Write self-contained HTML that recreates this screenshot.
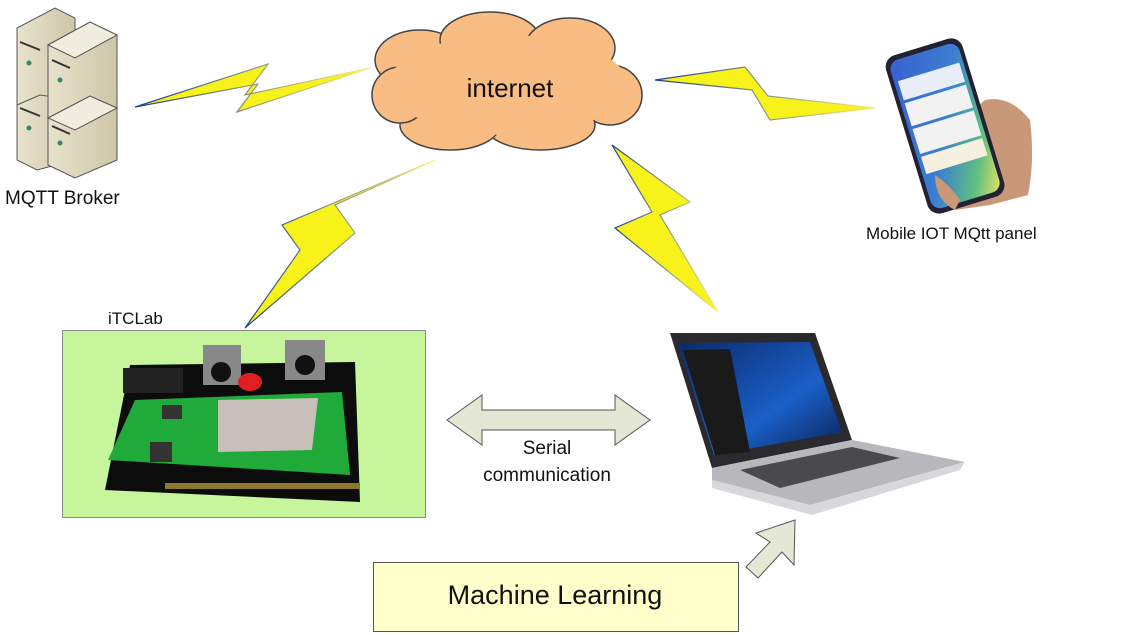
<!DOCTYPE html><html><head><meta charset="utf-8"><style>body{margin:0;background:#fff}svg{display:block}text{font-family:"Liberation Sans",sans-serif;fill:#111}</style></head><body>
<svg width="1128" height="635" viewBox="0 0 1128 635" xmlns="http://www.w3.org/2000/svg">
<defs>
<linearGradient id="bz" x1="0" x2="1"><stop offset="0" stop-color="#1c3f8a"/><stop offset="1" stop-color="#ffef7a"/></linearGradient>
<linearGradient id="ph" x1="0" y1="0" x2="1" y2="1"><stop offset="0" stop-color="#3a5fd0"/><stop offset=".5" stop-color="#3b7fd0"/><stop offset=".8" stop-color="#60c080"/><stop offset="1" stop-color="#f0e060"/></linearGradient>
<linearGradient id="win" x1="0" y1="0" x2="1" y2="1"><stop offset="0" stop-color="#0a2a6a"/><stop offset=".6" stop-color="#1a5fc8"/><stop offset="1" stop-color="#0a2050"/></linearGradient>
<linearGradient id="srv" x1="0" x2="1"><stop offset="0" stop-color="#e8e2cc"/><stop offset="1" stop-color="#cfc6a8"/></linearGradient>
</defs>
<!-- servers -->
<g stroke="#555" stroke-width="1">
<polygon points="17,28 55,8 75,18 75,100 37,120 17,110" fill="url(#srv)"/>
<polygon points="17,105 40,95 75,100 75,160 37,170 17,160" fill="url(#srv)"/>
<polygon points="48,45 90,22 117,35 117,112 75,132 48,118" fill="url(#srv)"/>
<polygon points="48,118 90,96 117,108 117,160 75,178 48,165" fill="url(#srv)"/>
<polygon points="48,45 90,22 117,35 75,58" fill="#f0ecde"/>
<polygon points="48,118 90,96 117,108 75,130" fill="#f0ecde"/>
</g>
<g fill="#2a8a6a"><circle cx="29" cy="63" r="2.5"/><circle cx="60" cy="80" r="2.5"/><circle cx="29" cy="128" r="2.5"/><circle cx="60" cy="143" r="2.5"/></g>
<g stroke="#333" stroke-width="2"><path d="M20,42l20,8M52,60l18,8M20,108l20,8M52,126l18,8"/></g>
<text x="5" y="204" font-size="19">MQTT Broker</text>
<!-- bolts -->
<g fill="#f6f21a" stroke="url(#bz)" stroke-width="1.2">
<polygon points="135,107 268,64 245,95 370,68 237,112 258,84"/>
<polygon points="655,80 745,67 768,96 875,108 770,120 752,90"/>
<polygon points="435,160 335,205 355,233 245,328 300,250 282,225"/>
<polygon points="612,145 690,202 660,215 718,312 615,228 652,212"/>
</g>
<!-- cloud -->
<g fill="#f9bd84" stroke="#444" stroke-width="1.5">
<ellipse cx="420" cy="60" rx="45" ry="30"/><ellipse cx="490" cy="40" rx="50" ry="28"/><ellipse cx="570" cy="48" rx="45" ry="30"/>
<ellipse cx="610" cy="95" rx="32" ry="30"/><ellipse cx="540" cy="125" rx="55" ry="25"/><ellipse cx="450" cy="125" rx="50" ry="25"/><ellipse cx="400" cy="95" rx="28" ry="28"/>
</g>
<ellipse cx="508" cy="85" rx="120" ry="50" fill="#f9bd84"/>
<text x="510" y="97" font-size="26" text-anchor="middle">internet</text>
<!-- phone -->
<path d="M935,175 Q960,120 985,100 Q1010,95 1030,120 Q1035,160 1028,195 L990,205 L955,210 Q935,200 935,175Z" fill="#c89878"/>
<g transform="rotate(-17 950 125)"><rect x="905" y="42" width="80" height="165" rx="12" fill="#223" /><rect x="909" y="47" width="72" height="155" rx="10" fill="url(#ph)"/>
<rect x="913" y="68" width="64" height="20" fill="#e8eef8"/><rect x="913" y="91" width="64" height="24" fill="#f2f2f2"/><rect x="913" y="118" width="64" height="26" fill="#f2f2f2"/><rect x="913" y="147" width="64" height="18" fill="#f5f0e0"/></g>
<path d="M935,175 Q950,185 960,200 L955,210 Q935,200 935,175Z" fill="#c89878"/>
<text x="866" y="239" font-size="17">Mobile IOT MQtt panel</text>
<!-- iTCLab -->
<text x="108" y="324" font-size="17">iTCLab</text>
<rect x="62.5" y="330.5" width="363" height="187" fill="#c7f59c" stroke="#888"/>
<polygon points="130,365 355,362 360,502 105,490" fill="#0c0c0c"/>
<rect x="203" y="345" width="38" height="40" fill="#888"/><circle cx="221" cy="372" r="10" fill="#111"/>
<rect x="285" y="340" width="40" height="40" fill="#888"/><circle cx="305" cy="365" r="10" fill="#111"/>
<rect x="123" y="368" width="60" height="25" fill="#222"/>
<ellipse cx="250" cy="382" rx="12" ry="9" fill="#e02020"/>
<polygon points="135,400 342,392 350,475 108,460" fill="#1faa3a"/>
<polygon points="218,400 318,398 312,450 218,452" fill="#c8c0b8"/>
<rect x="150" y="442" width="22" height="20" fill="#333"/><rect x="162" y="405" width="20" height="14" fill="#333"/>
<rect x="165" y="483" width="195" height="6" fill="#8a7a30"/>
<!-- serial arrow -->
<polygon points="447,420 482,395 482,410 615,410 615,395 650,420 615,445 615,430 482,430 482,445" fill="#e3e7d4" stroke="#555"/>
<text x="547" y="454" font-size="19" text-anchor="middle">Serial</text>
<text x="547" y="481" font-size="19" text-anchor="middle">communication</text>
<!-- laptop -->
<polygon points="670,333 815,333 852,440 712,468" fill="#2a2a2e"/>
<polygon points="678,343 810,342 842,432 714,455" fill="url(#win)"/>
<polygon points="683,350 730,349 750,452 715,455" fill="#1a1a1a"/>
<polygon points="712,468 852,440 965,462 810,505 712,480" fill="#b8b8bc"/>
<polygon points="740,470 852,447 900,458 780,488" fill="#4a4a4e"/>
<polygon points="712,480 810,505 965,462 960,470 812,515 712,488" fill="#d8d8dc"/>
<!-- ML arrow -->
<polygon points="756,533 795,520 794,565 782,552 758,578 746,567 770,542" fill="#e3e7d4" stroke="#555"/>
<!-- ML box -->
<rect x="373.5" y="562.5" width="365" height="69" fill="#ffffcc" stroke="#555"/>
<text x="555" y="604" font-size="27" text-anchor="middle">Machine Learning</text>
</svg></body></html>
